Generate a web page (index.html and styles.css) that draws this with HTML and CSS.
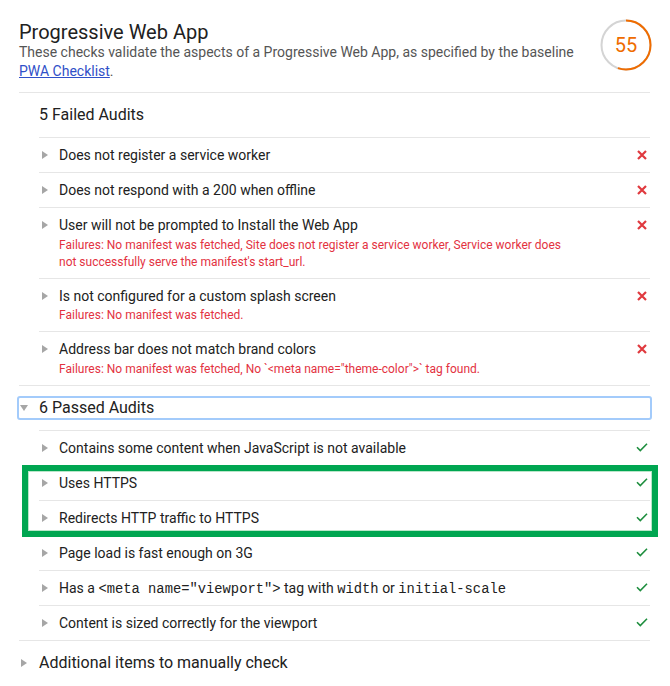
FILE: index.html
```html
<!DOCTYPE html>
<html lang="en">
<head>
<meta charset="utf-8">
<title>Progressive Web App</title>
<link rel="stylesheet" href="styles.css">
</head>
<body>
<div class="page">
  <header class="cat-header">
    <div class="cat-info">
      <h1 class="cat-title">Progressive Web App</h1>
      <p class="cat-desc">These checks validate the aspects of a Progressive Web App, as specified by the baseline <a class="cat-link" href="#">PWA Checklist</a>.</p>
    </div>
    <div class="gauge">
      <svg class="gauge-svg" width="52" height="52" viewBox="0 0 52 52">
        <circle class="gauge-base" cx="26" cy="26" r="24.5"></circle>
        <circle class="gauge-arc" cx="26" cy="26" r="24.5" transform="rotate(-90 26 26)"></circle>
      </svg>
      <span class="gauge-value">55</span>
    </div>
  </header>

  <section class="group">
    <div class="group-header">
      <span class="group-arrow"></span>
      <span class="group-title">5 Failed Audits</span>
    </div>
    <ul class="audit-list">
      <li class="audit">
        <span class="audit-arrow"><span class="tri-right"></span></span>
        <div class="audit-body"><div class="audit-title">Does not register a service worker</div></div>
        <span class="audit-icon"><svg class="icon-fail" width="10" height="10" viewBox="0 0 10 10"><path d="M1 1L9 9M9 1L1 9"/></svg></span>
      </li>
      <li class="audit">
        <span class="audit-arrow"><span class="tri-right"></span></span>
        <div class="audit-body"><div class="audit-title">Does not respond with a 200 when offline</div></div>
        <span class="audit-icon"><svg class="icon-fail" width="10" height="10" viewBox="0 0 10 10"><path d="M1 1L9 9M9 1L1 9"/></svg></span>
      </li>
      <li class="audit">
        <span class="audit-arrow"><span class="tri-right"></span></span>
        <div class="audit-body">
          <div class="audit-title">User will not be prompted to Install the Web App</div>
          <div class="audit-fail">Failures: No manifest was fetched, Site does not register a service worker, Service worker does not successfully serve the manifest's start_url.</div>
        </div>
        <span class="audit-icon"><svg class="icon-fail" width="10" height="10" viewBox="0 0 10 10"><path d="M1 1L9 9M9 1L1 9"/></svg></span>
      </li>
      <li class="audit">
        <span class="audit-arrow"><span class="tri-right"></span></span>
        <div class="audit-body">
          <div class="audit-title">Is not configured for a custom splash screen</div>
          <div class="audit-fail">Failures: No manifest was fetched.</div>
        </div>
        <span class="audit-icon"><svg class="icon-fail" width="10" height="10" viewBox="0 0 10 10"><path d="M1 1L9 9M9 1L1 9"/></svg></span>
      </li>
      <li class="audit">
        <span class="audit-arrow"><span class="tri-right"></span></span>
        <div class="audit-body">
          <div class="audit-title">Address bar does not match brand colors</div>
          <div class="audit-fail">Failures: No manifest was fetched, No `&lt;meta name="theme-color"&gt;` tag found.</div>
        </div>
        <span class="audit-icon"><svg class="icon-fail" width="10" height="10" viewBox="0 0 10 10"><path d="M1 1L9 9M9 1L1 9"/></svg></span>
      </li>
    </ul>
  </section>

  <section class="group">
    <div class="group-header">
      <div class="group-summary">
        <span class="group-arrow"><span class="tri-down"></span></span>
        <span class="group-title">6 Passed Audits</span>
      </div>
    </div>
    <ul class="audit-list">
      <li class="audit">
        <span class="audit-arrow"><span class="tri-right"></span></span>
        <div class="audit-body"><div class="audit-title">Contains some content when JavaScript is not available</div></div>
        <span class="audit-icon"><svg class="icon-pass" width="12" height="9" viewBox="0 0 12 9"><path d="M1 4.2L4.3 7.5L11 0.8"/></svg></span>
      </li>
      <li class="highlight">
        <ul class="audit-list">
          <li class="audit">
            <span class="audit-arrow"><span class="tri-right"></span></span>
            <div class="audit-body"><div class="audit-title">Uses HTTPS</div></div>
            <span class="audit-icon"><svg class="icon-pass" width="12" height="9" viewBox="0 0 12 9"><path d="M1 4.2L4.3 7.5L11 0.8"/></svg></span>
          </li>
          <li class="audit">
            <span class="audit-arrow"><span class="tri-right"></span></span>
            <div class="audit-body"><div class="audit-title">Redirects HTTP traffic to HTTPS</div></div>
            <span class="audit-icon"><svg class="icon-pass" width="12" height="9" viewBox="0 0 12 9"><path d="M1 4.2L4.3 7.5L11 0.8"/></svg></span>
          </li>
        </ul>
      </li>
      <li class="audit">
        <span class="audit-arrow"><span class="tri-right"></span></span>
        <div class="audit-body"><div class="audit-title">Page load is fast enough on 3G</div></div>
        <span class="audit-icon"><svg class="icon-pass" width="12" height="9" viewBox="0 0 12 9"><path d="M1 4.2L4.3 7.5L11 0.8"/></svg></span>
      </li>
      <li class="audit">
        <span class="audit-arrow"><span class="tri-right"></span></span>
        <div class="audit-body"><div class="audit-title">Has a <code class="code">&lt;meta name="viewport"&gt;</code> tag with <code class="code">width</code> or <code class="code">initial-scale</code></div></div>
        <span class="audit-icon"><svg class="icon-pass" width="12" height="9" viewBox="0 0 12 9"><path d="M1 4.2L4.3 7.5L11 0.8"/></svg></span>
      </li>
      <li class="audit">
        <span class="audit-arrow"><span class="tri-right"></span></span>
        <div class="audit-body"><div class="audit-title">Content is sized correctly for the viewport</div></div>
        <span class="audit-icon"><svg class="icon-pass" width="12" height="9" viewBox="0 0 12 9"><path d="M1 4.2L4.3 7.5L11 0.8"/></svg></span>
      </li>
    </ul>
  </section>

  <section class="group">
    <div class="group-header">
      <span class="group-arrow"><span class="tri-right tri-right--group"></span></span>
      <span class="group-title">Additional items to manually check</span>
    </div>
  </section>
</div>
</body>
</html>
```

FILE: styles.css
```css
* {
  box-sizing: border-box;
}

html, body {
  margin: 0;
  padding: 0;
  background: #ffffff;
}

body {
  font-family: Roboto, "Noto Sans", "Liberation Sans", sans-serif;
  color: #212121;
}

.page {
  width: 670px;
  padding: 0 20px 0 19px;
}

/* Header */
.cat-header {
  display: flex;
  align-items: flex-start;
  gap: 22px;
  padding: 19px 0 11px;
}

.cat-info {
  flex: 1;
  min-width: 0;
  padding-top: 2px;
}

.cat-title {
  margin: 0;
  font-size: 20px;
  line-height: 22px;
  font-weight: 400;
  color: #212121;
}

.cat-desc {
  margin: 0;
  font-size: 14px;
  line-height: 19px;
  color: #555555;
}

.cat-link {
  color: #3050c8;
  text-decoration: underline;
}

.gauge {
  position: relative;
  width: 52px;
  height: 52px;
  flex: none;
  margin-right: -2px;
}

.gauge-svg {
  display: block;
}

.gauge-base {
  fill: none;
  stroke: #d4d4d4;
  stroke-width: 2;
}

.gauge-arc {
  fill: none;
  stroke: #ef6c00;
  stroke-width: 2;
  stroke-dasharray: 84.7 200;
}

.gauge-value {
  position: absolute;
  inset: 0;
  display: flex;
  align-items: center;
  justify-content: center;
  font-size: 20px;
  color: #ef6c00;
}

/* Groups */
.group {
  border-top: 1px solid #e6e6e6;
}

.group-header {
  display: flex;
  align-items: center;
  padding: 12px 0;
}

.group-header--summary {
  display: block;
}

.group-summary {
  display: flex;
  align-items: center;
  height: 20px;
  width: 100%;
  outline: 2px solid #a3cbfb;
  border-radius: 1px;
}

.group-arrow {
  width: 20px;
  height: 20px;
  flex: none;
  display: flex;
  align-items: center;
}

.group-title {
  font-size: 16px;
  line-height: 20px;
  color: #212121;
}

.tri-down {
  width: 0;
  height: 0;
  margin-left: 1px;
  border-left: 4px solid transparent;
  border-right: 4px solid transparent;
  border-top: 6px solid #a6a6a6;
}

.tri-right {
  width: 0;
  height: 0;
  margin-left: 3px;
  border-top: 4px solid transparent;
  border-bottom: 4px solid transparent;
  border-left: 6px solid #a6a6a6;
}

.tri-right--group {
  margin-left: 2px;
}

/* Audits */
.audit-list {
  list-style: none;
  margin: 0 0 0 20px;
  padding: 0;
}

.highlight .audit-list {
  margin-left: 0;
}

.audit {
  display: flex;
  align-items: flex-start;
  border-top: 1px solid #e6e6e6;
  padding: 7px 2px 7px 0;
}

.audit-arrow {
  width: 20px;
  height: 20px;
  flex: none;
  display: flex;
  align-items: center;
}

.audit-body {
  flex: 1;
  min-width: 0;
}

.audit-title {
  font-size: 14px;
  line-height: 20px;
  height: 20px;
  color: #212121;
}

.audit-fail {
  margin-top: 1.5px;
  font-size: 12px;
  line-height: 17px;
  color: #e3323f;
  padding-right: 60px;
}

.code {
  font-family: "Liberation Mono", "DejaVu Sans Mono", monospace;
  font-size: 13.8px;
  line-height: 1;
}

.audit-icon {
  width: 12px;
  height: 20px;
  flex: none;
  display: flex;
  align-items: center;
  justify-content: center;
}

.icon-fail path {
  fill: none;
  stroke: #e0393e;
  stroke-width: 2.2;
}

.icon-pass path {
  fill: none;
  stroke: #1e8e3e;
  stroke-width: 1.6;
}

/* Annotation box */
.highlight {
  position: relative;
}

.highlight::after {
  content: "";
  position: absolute;
  top: 0;
  bottom: -2px;
  left: -17px;
  right: -8px;
  border: 6px solid #00a651;
  box-shadow: inset 0 0 0 1px #b9e6c9;
  pointer-events: none;
}
```
